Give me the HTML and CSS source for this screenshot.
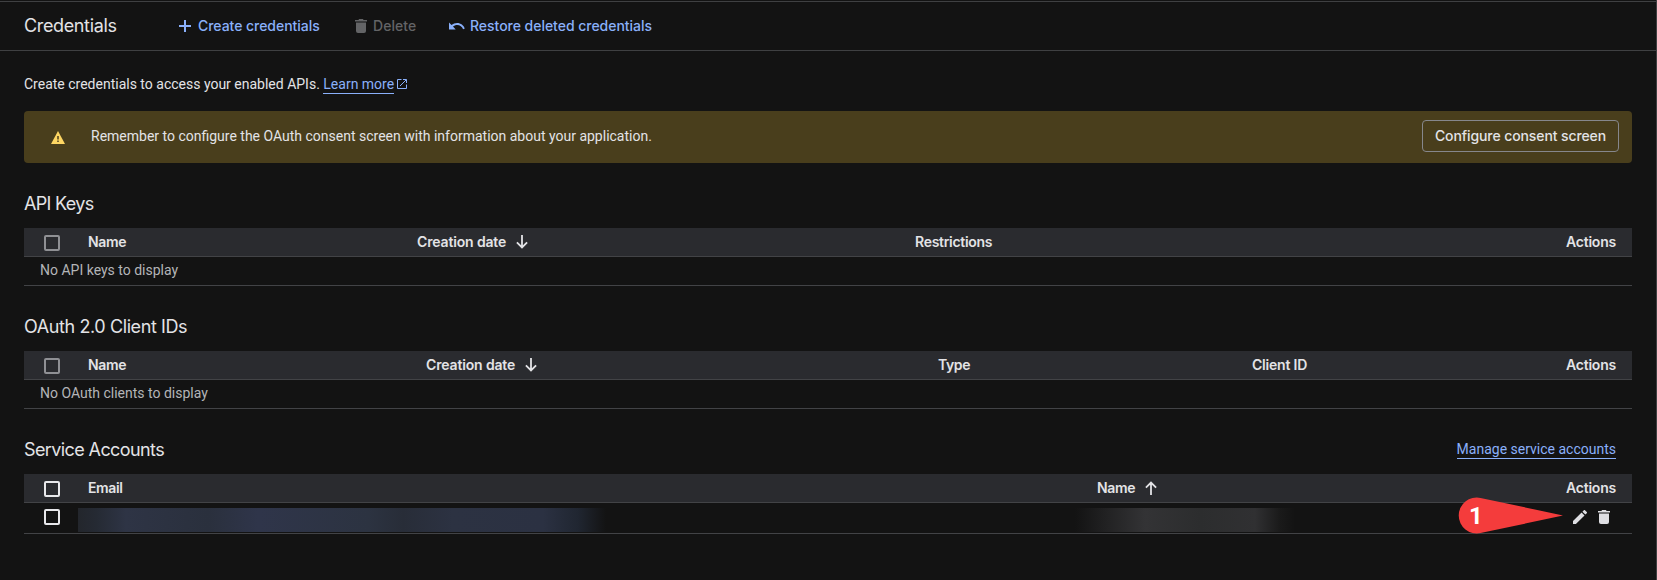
FILE: index.html
```
<!DOCTYPE html>
<html lang="en">
<head>
<meta charset="utf-8">
<title>Credentials</title>
<link rel="stylesheet" href="styles.css">
</head>
<body>
<div class="page">
  <header class="toolbar">
    <h1 class="toolbar-title">Credentials</h1>
    <a class="action action-create"><svg width="12" height="12" viewBox="0 0 12 12"><path d="M6 0v12M0 6h12" stroke="currentColor" stroke-width="2"/></svg><span>Create credentials</span></a>
    <a class="action action-delete"><svg width="12" height="14" viewBox="0 0 12 14"><path d="M0 1h3.500L4 0h4l.5 1H12v1.500H0zM1 3.500h10V12a2 2 0 0 1-2 2H3a2 2 0 0 1-2-2z" fill="currentColor"/></svg><span>Delete</span></a>
    <a class="action action-restore"><svg width="16" height="9" viewBox="0 0 16 9"><path d="M0 .5l2.500 2.600C4.100 1.800 6 1 8.200 1c3.500 0 6.500 2.300 7.600 5.600l-1.700.6C13.200 4.700 10.900 3 8.200 3 6.600 3 5.100 3.600 4 4.600L6.700 7.400H0z" fill="currentColor"/></svg><span>Restore deleted credentials</span></a>
  </header>

  <main class="content">
    <p class="intro">Create credentials to access your enabled APIs. <a class="link">Learn more</a><svg width="10" height="10" viewBox="0 0 10 10"><path d="M4.500.5h-4v9h9v-4M6 .5h3.500V4M9.200.8L3 7" fill="none" stroke="currentColor"/></svg></p>

    <div class="banner">
      <svg class="warning" width="14" height="13" viewBox="0 0 14 13"><path d="M7 0l7 13H0z" fill="#fdd663"/><path d="M7 5v3.500M7 9.500V11" stroke="#493e1c" stroke-width="1.500"/></svg>
      <span class="banner-text">Remember to configure the OAuth consent screen with information about your application.</span>
      <button class="button"><span>Configure consent screen</span></button>
    </div>

    <section class="section">
      <div class="section-head"><h2 class="t-api">API Keys</h2></div>
      <div class="row row-head cols-api">
        <span class="check check-dim"></span><span class="name">Name</span>
        <span class="sorted"><span class="date">Creation date</span><svg width="12" height="14" viewBox="0 0 12 14"><path d="M6 0v12.500M.9 7.400L6 12.500l5.100-5.100" fill="none" stroke="currentColor" stroke-width="1.800"/></svg></span>
        <span class="restrictions">Restrictions</span><span class="actions">Actions</span>
      </div>
      <div class="row row-empty">No API keys to display</div>
    </section>

    <section class="section">
      <div class="section-head"><h2 class="t-oauth">OAuth 2.0 Client IDs</h2></div>
      <div class="row row-head cols-oauth">
        <span class="check check-dim"></span><span class="name">Name</span>
        <span class="sorted"><span class="date">Creation date</span><svg width="12" height="14" viewBox="0 0 12 14"><path d="M6 0v12.500M.9 7.400L6 12.500l5.100-5.100" fill="none" stroke="currentColor" stroke-width="1.800"/></svg></span>
        <span class="type">Type</span><span class="client">Client ID</span><span class="actions">Actions</span>
      </div>
      <div class="row row-empty">No OAuth clients to display</div>
    </section>

    <section class="section">
      <div class="section-head"><h2 class="t-service">Service Accounts</h2><a class="link link-manage">Manage service accounts</a></div>
      <div class="row row-head cols-service">
        <span class="check"></span><span class="email">Email</span>
        <span class="sorted"><span class="name">Name</span><svg width="12" height="14" viewBox="0 0 12 14"><path d="M6 14V1.500M.9 6.600L6 1.500l5.100 5.100" fill="none" stroke="currentColor" stroke-width="1.800"/></svg></span>
        <span class="actions">Actions</span>
      </div>
      <div class="row row-account">
        <span class="check"></span>
        <span class="masked masked-email"></span>
        <span class="masked masked-name"></span>
        <span class="row-icons">
          <svg width="14" height="14" viewBox="3 3 18 18"><path d="M3 17.250V21h3.750L17.810 9.940l-3.750-3.750L3 17.250zM20.710 7.040a1 1 0 0 0 0-1.410l-2.340-2.340a1 1 0 0 0-1.410 0l-1.830 1.830 3.750 3.750 1.830-1.830z" fill="currentColor"/></svg>
          <svg width="12" height="14" viewBox="0 0 12 14"><path d="M0 1h3.500L4 0h4l.5 1H12v1.500H0zM1 3.500h10V12a2 2 0 0 1-2 2H3a2 2 0 0 1-2-2z" fill="currentColor"/></svg>
        </span>
        <span class="callout"><svg width="108" height="38" viewBox="0 0 108 38"><path d="M107 19.500L24.500 1.900A18 18 0 1 0 24.500 37.100Z" fill="#f43c3c"/></svg><b>1</b></span>
      </div>
    </section>
  </main>
</div>
</body>
</html>
```
FILE: styles.css
```
* { box-sizing: border-box; }
html { background: #131313; }
body { margin: 0; color: #e3e3e6; font: 14px/20px Roboto, sans-serif; }
svg { display: block; flex: none; }
h1, h2, p { margin: 0; }

.page { width: 1657px; height: 580px; padding-top: 1px; border-right: 1px solid #3f4042; background: #131313; overflow: hidden; }
.toolbar, h2, .button, .row-head { font-family: Inter, sans-serif; }
.toolbar { display: flex; align-items: center; height: 50px; padding-left: 24px; border: solid #3f4042; border-width: 1px 0; }
.toolbar-title { width: 155px; font-size: 18px; font-weight: 400; letter-spacing: -0.36px; white-space: nowrap; }
.action { display: flex; align-items: center; color: #8ab0fa; font-weight: 500; white-space: nowrap; }
.action-create { gap: 7px; width: 176px; letter-spacing: -0.04px; }
.action-delete { gap: 6px; width: 94px; color: #636466; letter-spacing: 0.05px; }
.action-restore { gap: 5px; letter-spacing: -0.03px; }

.content { padding: 23px 24px 0; }
.intro { display: flex; align-items: center; height: 20px; white-space: pre; }
.intro svg { margin-left: 3px; color: #8ab0fa; }
.link { height: 20px; color: #8ab0fa; border-bottom: 1px solid #8ab0fa; }

.banner { display: flex; align-items: center; height: 52px; margin-top: 17px; padding: 0 13px 0 27px; border-radius: 4px; background: #493e1c; }
.warning { margin-top: 1px; }
.banner-text { flex: 1; padding-left: 26px; margin-top: -2px; }
.button { width: 197px; height: 32px; margin-top: -2px; padding: 0 0 2px; border: 1px solid #86878c; border-radius: 4px; background: none; color: #e3e3e6; font-size: 14px; font-weight: 500; letter-spacing: -0.1px; white-space: nowrap; }

.section-head { display: flex; justify-content: space-between; height: 65px; padding: 30px 16px 0 0; }
h2 { font-size: 18px; font-weight: 400; line-height: 22px; }
.t-api { letter-spacing: -0.68px; }
.t-oauth { letter-spacing: -0.4px; }
.t-service { letter-spacing: -0.6px; }
.link-manage { height: 20px; }

.row { display: grid; align-items: center; border-bottom: 1px solid #424346; }
.row-head { height: 29px; padding: 0 16px 0 20px; background: #2a2b2f; font-weight: 600; }
.cols-api { grid-template-columns: 44px 329px 498px 1fr auto; }
.cols-oauth { grid-template-columns: 44px 338px 512px 314px 1fr auto; }
.cols-service { grid-template-columns: 44px 1009px 1fr auto; }
.row-empty { height: 29px; padding: 0 0 2px 16px; color: #b4b5b8; }
.row-account { position: relative; grid-template-columns: 34px 997px 1fr auto; grid-template-rows: 28px; height: 31px; padding: 0 22px 2px 20px; }
.check { width: 16px; height: 16px; border: 2px solid #e8e8eb; border-radius: 2px; }
.row-head .check { margin-top: 1px; }
.check-dim { border-color: #8f9094; }
.sorted { display: flex; align-items: center; gap: 10px; }
.name, .date, .restrictions, .type, .client, .email, .actions { letter-spacing: -0.4px; white-space: nowrap; }
.name { letter-spacing: -0.32px; }
.date { letter-spacing: -0.15px; }
.restrictions { letter-spacing: -0.3px; }
.client { letter-spacing: -0.2px; }
.actions { letter-spacing: -0.22px; }
.masked { align-self: start; height: 24px; margin-top: 5px; }
.masked-email { width: 530px; background: linear-gradient(90deg, #23262c 0, #252a33 18px, #2e3445 48px, #2a303d 130px, #2f354a 180px, #2c3341 290px, #282d38 325px, #2c3242 375px, #2b3142 465px, #202631 500px, #131313 528px); }
.masked-name { width: 220px; background: linear-gradient(90deg, #131313 0, #202021 28px, #333335 70px, #2c2d2e 125px, #303032 180px, #1a1a1a 205px, #131313 220px); }
.row-icons { display: flex; gap: 11px; color: #dedee2; }
.callout { position: absolute; left: 1432px; top: -7px; width: 108px; height: 38px; }
.callout b { position: absolute; left: 13px; top: 7px; color: #fff; font: bold 24px/26px Roboto, sans-serif; }
```
